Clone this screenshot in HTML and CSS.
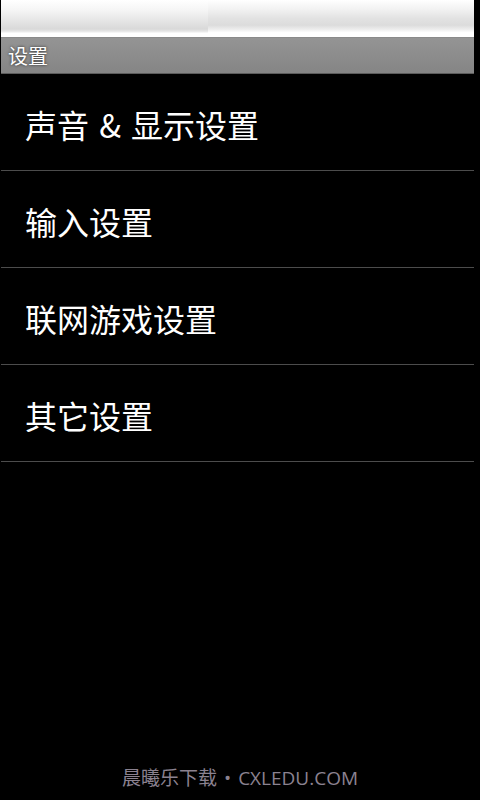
FILE: index.html
```html
<!DOCTYPE html>
<html lang="zh">
<head>
<meta charset="utf-8">
<title>设置</title>
<link rel="stylesheet" href="styles.css">
</head>
<body>
<div class="screen">
  <div class="statusbar">
    <div class="sb-left"></div>
    <div class="sb-right"></div>
  </div>
  <div class="titlebar"><span class="title">设置</span></div>
  <ul class="menu">
    <li class="item">声音 &amp; 显示设置</li>
    <li class="item">输入设置</li>
    <li class="item">联网游戏设置</li>
    <li class="item">其它设置</li>
  </ul>
</div>
<div class="watermark">晨曦乐下载<span class="dot">•</span>CXLEDU.COM</div>
</body>
</html>
```
FILE: styles.css
```css
html, body {
  margin: 0;
  padding: 0;
  background: #000;
  width: 480px;
  height: 800px;
  overflow: hidden;
  font-family: "Noto Sans CJK SC", "Noto Sans", sans-serif;
}
body {
  position: relative;
}
.screen {
  margin-left: 1px;
  width: 473px;
}
.statusbar {
  display: flex;
  height: 37px;
}
.sb-left {
  width: 207px;
  background: linear-gradient(#ffffff 0%, #f6f6f6 25%, #e6e6e6 55%, #d9d9d9 78%, #e4e4e4 84%, #ffffff 90%, #ffffff 100%);
}
.sb-right {
  flex: 1;
  background: linear-gradient(#ffffff 0%, #f2f2f2 25%, #e2e2e2 50%, #dcdcdc 68%, #eeeeee 80%, #ffffff 88%, #ffffff 100%);
}
.titlebar {
  height: 35px;
  background: linear-gradient(#949494, #858585);
  border-top: 1px solid #8a8a8a;
  border-bottom: 1px solid #5c5c5c;
  display: flex;
  align-items: center;
  padding-left: 7px;
}
.title {
  color: #fff;
  font-size: 20px;
  line-height: 1;
  text-shadow: 0 0 3px rgba(0, 0, 0, 0.75);
}
.menu {
  list-style: none;
  margin: 0;
  padding: 0;
}
.item {
  height: 93px;
  padding-top: 3px;
  border-bottom: 1px solid #4c4c4c;
  display: flex;
  align-items: center;
  padding-left: 24px;
  color: #fff;
  font-size: 32px;
  line-height: 1;
  word-spacing: 3px;
}
.watermark {
  position: absolute;
  left: 0;
  right: 0;
  top: 766px;
  text-align: center;
  color: #8b8290;
  font-family: "Open Sans", "Noto Sans CJK SC", sans-serif;
  font-size: 19px;
  line-height: 24px;
}
.dot {
  margin: 0 7px;
}
```
